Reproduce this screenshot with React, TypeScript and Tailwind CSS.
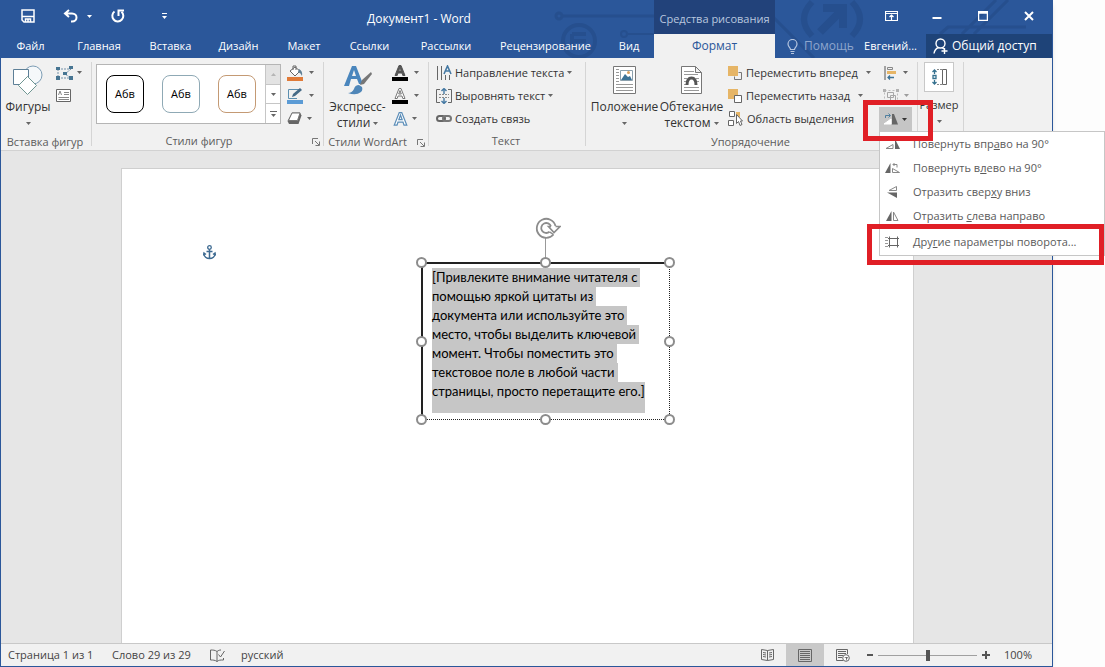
import React from "react";

type Kids = { children?: React.ReactNode };

function Caret({ className = "text-[#666]" }: { className?: string }) {
  return (
    <svg className={"h-[3px] w-[5px] shrink-0 " + className} viewBox="0 0 5 3" aria-hidden="true">
      <path d="M0 0h5L2.5 3z" fill="currentColor" />
    </svg>
  );
}

function Svg({ w, h, children, className = "" }: Kids & { w: number; h: number; className?: string }) {
  return (
    <svg width={w} height={h} viewBox={`0 0 ${w} ${h}`} fill="none" className={"shrink-0 " + className} aria-hidden="true">
      {children}
    </svg>
  );
}

function Launcher({ label }: { label: string }) {
  return (
    <button aria-label={label} className="absolute right-1 top-2">
      <Svg w={8} h={8}>
        <path d="M.5 6V.5H6M3 3l4 4M7.500 3.500v4h-4" stroke="#777" />
      </Svg>
    </button>
  );
}

function Group({ title, width, launcher, children }: Kids & { title: string; width: string; launcher?: boolean }) {
  return (
    <section aria-label={title || "Размер"} className={"relative flex shrink-0 flex-col pt-[3px] " + width}>
      <div className="flex h-[70px]">{children}</div>
      <div className="relative flex h-5 items-center justify-center whitespace-nowrap pt-[2px] text-[11px] text-[#5c5c5c]">
        <span className={launcher ? "pr-[18px]" : "pr-[3px]"}>{title}</span>
        {launcher && <Launcher label={title + ": параметры"} />}
      </div>
      <div className="absolute bottom-1 right-0 top-1 w-px bg-[#d5d5d5]" />
    </section>
  );
}

function BigButton({ icon, lines, caretBelow, width }: { icon: React.ReactNode; lines: string[]; caretBelow?: boolean; width: string }) {
  return (
    <button className={"flex shrink-0 flex-col items-center whitespace-nowrap text-[#333] " + width}>
      <span className="flex h-[38px] items-center justify-center">{icon}</span>
      {lines.map((line, i) => (
        <span key={line} className="flex h-4 items-center gap-[3px] text-[12px]">
          {line}
          {!caretBelow && i === lines.length - 1 && <Caret />}
        </span>
      ))}
      {caretBelow && (
        <span className="flex h-4 items-center">
          <Caret />
        </span>
      )}
    </button>
  );
}

function Row({ icon, text, caret, gap = "gap-1", caretGap = "" }: { icon: React.ReactNode; text?: string; caret?: boolean; gap?: string; caretGap?: string }) {
  return (
    <button className={"flex h-[23px] items-center whitespace-nowrap text-[11px] text-[#333] " + gap} aria-label={text ? undefined : "Параметры"}>
      {icon}
      {text}
      {caret && <Caret className={"text-[#666] " + caretGap} />}
    </button>
  );
}

const tabs: [string, string][] = [
  ["Файл", "w-[59px]"],
  ["Главная", "w-[78px]"],
  ["Вставка", "w-[65px]"],
  ["Дизайн", "w-[71px]"],
  ["Макет", "w-[60px]"],
  ["Ссылки", "w-[71px]"],
  ["Рассылки", "w-[82px]"],
  ["Рецензирование", "w-[117px]"],
  ["Вид", "w-[50px]"],
];

function Header() {
  return (
    <header className="relative bg-[#2b579a] text-white">
      <svg className="absolute right-0 top-0 h-[58px] w-[500px]" viewBox="0 0 500 58" fill="none" aria-hidden="true">
        <g stroke="#264f8e" strokeWidth="4">
          <circle cx="7" cy="16" r="3" strokeWidth="3" />
          <path d="M11 16H220l42 42" strokeWidth="3" />
          <circle cx="27" cy="41" r="16" />
          <path d="M20 34h14M20 41h14M20 48h10M20 34v14" />
          <circle cx="72" cy="34" r="3" strokeWidth="2" />
          <path d="M76 34h80" strokeWidth="2" />
          <path d="M260 2q-16 17 0 34M300 2q16 17 0 34" strokeWidth="6" />
          <path d="M268 32l22-22M271 8h20v20" strokeWidth="8" />
          <path d="M388 34l8-7h78M410 34l34-34M422 34l34-34" strokeWidth="3" />
        </g>
      </svg>
      <div className="relative flex h-[34px]">
        <div className="flex w-[653px] shrink-0 items-center pb-[2px]">
          <button aria-label="Сохранить" className="flex w-[54px] justify-center">
            <Svg w={14} h={14}>
              <path d="M1 1h12v12H3l-2-2zM1 7.500h12M4.500 13v-3h5v3M7 10v3" stroke="#fff" strokeWidth="1.500" />
            </Svg>
          </button>
          <button aria-label="Отменить" className="flex w-[31px] justify-center">
            <Svg w={16} h={14}>
              <path d="M6 1L2 4.500 6 8M2.500 4.500H9c6 0 6 8 0 8H8" stroke="#fff" strokeWidth="2" />
            </Svg>
          </button>
          <button aria-label="Список отмены" className="flex w-[6px] justify-center">
            <Caret className="text-white" />
          </button>
          <button aria-label="Повторить" className="flex w-[52px] justify-center">
            <Svg w={14} h={14}>
              <path d="M3.500 2.500A5.500 5.500 0 1 0 10.500 2.800" stroke="#fff" strokeWidth="2" />
              <path d="M7.500 7V1.500H13" stroke="#fff" strokeWidth="2" />
            </Svg>
          </button>
          <button aria-label="Настройка панели" className="flex w-10 justify-center">
            <Svg w={5} h={6}>
              <path d="M0 .5h5" stroke="#fff" />
              <path d="M0 3h5L2.500 6z" fill="#fff" />
            </Svg>
          </button>
          <h1 className="flex-1 pt-[5px] text-center">Документ1 - Word</h1>
        </div>
        <div className="flex w-[121px] shrink-0 items-center justify-center whitespace-nowrap bg-[#22427a] pt-1 text-[11px] text-[#b9c7df]">Средства рисования</div>
        <div className="flex flex-1 items-center justify-end pb-[2px]">
          <button aria-label="Параметры ленты" className="flex w-[46px] justify-center">
            <Svg w={13} h={10}>
              <path d="M.5.5h12v9H.5zM.5 2.500h12M6.500 9V4M4.500 6l2-2 2 2" stroke="#fff" strokeWidth="1.200" />
            </Svg>
          </button>
          <button aria-label="Свернуть" className="flex w-[46px] justify-center">
            <Svg w={10} h={10}>
              <path d="M.5 7h9" stroke="#fff" strokeWidth="2" />
            </Svg>
          </button>
          <button aria-label="Развернуть" className="flex w-[46px] justify-center">
            <Svg w={10} h={10}>
              <path d="M.5.5h9v9h-9zM0 2h10" stroke="#fff" strokeWidth="1.500" />
            </Svg>
          </button>
          <button aria-label="Закрыть" className="flex w-[46px] justify-center">
            <Svg w={10} h={10}>
              <path d="M1 1l8 8M9 1L1 9" stroke="#fff" strokeWidth="2" />
            </Svg>
          </button>
        </div>
      </div>
      <nav className="relative flex h-6 whitespace-nowrap text-[11px]">
        {tabs.map(([name, width]) => (
          <button key={name} className={"shrink-0 text-center " + width}>
            {name}
          </button>
        ))}
        <button className="w-[121px] shrink-0 bg-[#f1f1f1] text-[12px] text-[#2b579a]">Формат</button>
        <button className="flex w-[80px] shrink-0 items-center gap-[6px] pl-3 text-[12px] text-[#8ea6cd]">
          <Svg w={11} h={15} className="text-[#b5c5df]">
            <path d="M3.500 10.500c0-2-2.500-2.500-2.500-5.500a4.500 4.500 0 0 1 9 0c0 3-2.500 3.500-2.500 5.500zM3.500 12.500h4M4 14.500h3" stroke="currentColor" strokeWidth="1.200" />
          </Svg>
          Помощь
        </button>
        <button className="flex-1 text-center">Евгений...</button>
        <button className="flex w-[126px] shrink-0 items-center gap-1 bg-[#1e4378] pl-[7px] text-[12px]">
          <Svg w={15} h={16}>
            <circle cx="7.500" cy="5.500" r="4.500" stroke="#fff" strokeWidth="1.400" />
            <path d="M5.500 9.500C3 10.500 1.500 12.500 1 15.500M9 9.500l2 1.500M11.500 10v6M8.500 13h6" stroke="#fff" strokeWidth="1.400" />
          </Svg>
          Общий доступ
        </button>
      </nav>
    </header>
  );
}

const samples = ["border-black", "border-[#8fa9b5]", "border-[#c49a74]"];

const menuItems: { before: string; key: string; after: string; icon: React.ReactNode }[] = [
  {
    before: "Повернуть впр", key: "а", after: "во на 90°",
    icon: <><path d="M1 11.500h7v-4z" stroke="#888" /><path d="M10 2v10h5z" fill="#666" /></>,
  },
  {
    before: "Повернуть в", key: "л", after: "ево на 90°",
    icon: <><path d="M5.500 2v10H0z" fill="#666" /><path d="M7.500 11.500h7l-7-4zM8 3.500h4v3M9.500 2L8 3.500 9.500 5" stroke="#888" /></>,
  },
  {
    before: "Отразить свер", key: "х", after: "у вниз",
    icon: <><path d="M11.500 1.500v4H4z" stroke="#888" /><path d="M2 7.500h10V13z" fill="#666" /></>,
  },
  {
    before: "Отразить ", key: "с", after: "лева направо",
    icon: <><path d="M6.500 2v10H1z" fill="#666" /><path d="M8.500 3v8.500H13z" stroke="#888" /></>,
  },
];

function RotateMenu() {
  return (
    <div role="menu" className="absolute left-0 top-full z-20 w-[226px] border border-[#c6c6c6] bg-white text-[11px] text-[#5a5a5a]">
      {menuItems.map((item) => (
        <button key={item.before} role="menuitem" className="flex h-6 w-full items-center gap-3 whitespace-nowrap pl-[5px]">
          <Svg w={16} h={14}>{item.icon}</Svg>
          <span>
            {item.before}<u>{item.key}</u>{item.after}
          </span>
        </button>
      ))}
      <button role="menuitem" className="flex h-[27px] w-full items-center gap-3 whitespace-nowrap pl-[5px]">
        <Svg w={16} h={14}>
          <path d="M4.500 3.500h8v7h-8zM4.500 1.500v11M12.500 1.500v11M3 3.500h11M3 10.500h11" stroke="#666" />
          <path d="M0 2.500h3M0 5.500h3M0 8.500h3M0 11.500h3" stroke="#999" />
        </Svg>
        <span>
          Дру<u>г</u>ие параметры поворота...
        </span>
      </button>
      <div className="pointer-events-none absolute -bottom-[10px] -left-[13px] right-0 h-[41px] border-[5px] border-[#e01f26]" />
    </div>
  );
}

function LetterA({ fill, stroke, bar }: { fill: string; stroke: string; bar?: boolean }) {
  return (
    <span className="flex w-4 flex-col items-center">
      <Svg w={bar ? 12 : 15} h={bar ? 11 : 14}>
        <g transform={bar ? undefined : "scale(1.25)"}>
          <path d="M1 10.500L5 .5h2l4 10H8.800L8 8H4l-.8 2.500zM4.700 6h2.600L6 2.500z" fill={fill} stroke={stroke} strokeWidth="1" />
        </g>
      </Svg>
      {bar && <span className="mt-px h-1 w-4 bg-black" />}
    </span>
  );
}

function Ribbon() {
  return (
    <div className="relative flex h-[93px] border-b border-[#d2d2d2] bg-[#f1f1f1]">
      <Group title="Вставка фигур" width="w-[91px]">
        <BigButton
          width="w-[54px]"
          caretBelow
          lines={["Фигуры"]}
          icon={
            <Svg w={30} h={30}>
              <circle cx="20" cy="10" r="9" stroke="#7d9db5" fill="#f5f8fa" />
              <path d="M.5 4.500h15v15H.5z" stroke="#5d7f97" fill="#fff" />
              <path d="M14.500 11.500l9 9-9 9-9-9z" stroke="#6f9692" fill="#fff" />
            </Svg>
          }
        />
        <div className="ml-px flex flex-col">
          <Row
            caret
            icon={
              <Svg w={17} h={14}>
                <path d="M2 3h13M2 12h13M2 3v9M15 3L9 8l6 4" stroke="#7391a8" strokeDasharray="2 1" />
                <path d="M0 1h4v3H0zM13 0h4v3h-4zM0 10h4v4H0zM13 10h4v4h-4zM7 6h4v3H7z" fill="#477592" />
              </Svg>
            }
          />
          <Row
            icon={
              <Svg w={15} h={13}>
                <path d="M.5.5h14v12H.5z" stroke="#666" fill="#fff" />
                <path d="M2.500 6l1.500-4 1.500 4M8 3.500h5M8 5.500h5M2.500 8.500H13M2.500 10.500H13" stroke="#888" />
              </Svg>
            }
          />
        </div>
      </Group>

      <Group title="Стили фигур" width="w-[232px]" launcher>
        <div className="ml-1 mt-[3px] flex h-[60px] w-[185px] shrink-0 border border-[#b5b5b5] bg-white">
          <div className="flex flex-1 items-center justify-between px-[9px]">
            {samples.map((color) => (
              <button key={color} className={"h-[38px] w-[38px] rounded-lg border bg-white text-[11px] text-black " + color}>
                Абв
              </button>
            ))}
          </div>
          <div className="flex w-[15px] flex-col border-l border-[#c6c6c6]">
            <button aria-label="Вверх" className="flex flex-1 items-center justify-center bg-[#e3e3e3]">
              <Caret className="rotate-180 text-[#b5b5b5]" />
            </button>
            <button aria-label="Вниз" className="flex flex-1 items-center justify-center border-y border-[#c6c6c6]">
              <Caret />
            </button>
            <button aria-label="Все стили" className="flex flex-1 flex-col items-center justify-center gap-[2px]">
              <span className="h-px w-[7px] bg-[#666]" />
              <Caret />
            </button>
          </div>
        </div>
        <div className="ml-[6px] flex flex-col">
          <Row
            caret
            gap="gap-[6px]"
            icon={
              <Svg w={16} h={16}>
                <path d="M3 6l5-4 5 4-5 5zM6 5V1h3v4" fill="#fff" stroke="#666" />
                <path d="M12 4q4 2 3 7-1-3-4-4z" fill="#5f7f95" />
                <path d="M0 12h16v4H0z" fill="#e07b39" />
              </Svg>
            }
          />
          <Row
            caret
            gap="gap-[6px]"
            icon={
              <Svg w={16} h={16}>
                <path d="M12 1.500H1.500v9H10" stroke="#5c8fb0" />
                <path d="M5 9l1-3 7-6 2 2-7 6z" fill="#466b87" />
                <path d="M0 12h16v4H0z" fill="#5b9bd5" />
              </Svg>
            }
          />
          <Row
            caret
            gap="gap-[5px]"
            icon={
              <Svg w={15} h={13}>
                <path d="M5 .5h8l1.500 3-3 8.500H2L.5 9z" fill="#666" />
                <path d="M5 1h8L10.500 8.500h-9z" fill="#fff" stroke="#777" />
              </Svg>
            }
          />
        </div>
      </Group>

      <Group title="Стили WordArt" width="w-[105px]" launcher>
        <BigButton
          width="w-[67px]"
          lines={["Экспресс-", "стили"]}
          icon={
            <Svg w={30} h={30}>
              <path d="M1 21L9 1h4l7 18h-4l-2-5H8l-2 7zM9 11h4l-2-6z" fill="#4a86bd" />
              <path d="M28 7l-9 8-2 5 4-1 8-10z" fill="#777" />
              <path d="M16 20q-4 0-5 4-2 4-6 4 8 3 13-1 2-2 1-5z" fill="#4f86b8" />
            </Svg>
          }
        />
        <div className="ml-px flex flex-col">
          <Row caret gap="gap-[6px]" icon={<LetterA fill="#555" stroke="#555" bar />} />
          <Row caret gap="gap-[6px]" icon={<LetterA fill="#fff" stroke="#777" bar />} />
          <Row caret icon={<LetterA fill="#fff" stroke="#5b8db8" />} />
        </div>
      </Group>

      <Group title="Текст" width="w-[157px]">
        <div className="ml-[7px] flex flex-col">
          <Row
            caret
            text="Направление текста"
            gap="gap-[3px]"
            icon={
              <Svg w={16} h={16}>
                <path d="M1.500 1v14M5.500 1v14M9.500 10v5M13.500 10v5" stroke="#666" />
                <path d="M8 9l3.500-8L15 9M9.500 6h4" stroke="#4579a3" strokeWidth="1.600" />
              </Svg>
            }
          />
          <Row
            caret
            text="Выровнять текст"
            gap="gap-[3px]"
            icon={
              <Svg w={16} h={16}>
                <path d="M4 1.500H.5v13H4M12 1.500h3.500v13H12" stroke="#666" />
                <path d="M3 6.500h10M3 9.500h10" stroke="#888" strokeDasharray="2 1" />
                <path d="M8 0v6M5.500 3L8 .5 10.500 3M8 10v6M5.500 13L8 15.500l2.500-2.500" stroke="#4579a3" strokeWidth="1.400" />
              </Svg>
            }
          />
          <Row
            text="Создать связь"
            gap="gap-[3px]"
            icon={
              <Svg w={16} h={16}>
                <rect x="1" y="5" width="8" height="5" rx="2.500" stroke="#666" strokeWidth="2" />
                <rect x="7" y="5" width="8" height="5" rx="2.500" stroke="#777" strokeWidth="2" />
              </Svg>
            }
          />
        </div>
      </Group>

      <Group title="Упорядочение" width="w-[332px]">
        <BigButton
          width="w-[77px]"
          caretBelow
          lines={["Положение"]}
          icon={
            <Svg w={23} h={28}>
              <path d="M.5.5h22v27H.5z" stroke="#777" fill="#fff" />
              <path d="M3 3.500h3M3 6.500h3M3 9.500h3M3 12.500h3M3 15.500h3M3 18.500h17M3 21.500h17M3 24.500h17" stroke="#999" />
              <path d="M7.500 4.500h12v10h-12z" stroke="#8ba0ad" fill="#fff" />
              <path d="M8 14l4-6 3 3 2-1 2 4z" fill="#3c7296" />
              <circle cx="15.500" cy="6.500" r="1.500" fill="#d8a05d" />
            </Svg>
          }
        />
        <BigButton
          width="w-[57px]"
          lines={["Обтекание", "текстом"]}
          icon={
            <Svg w={21} h={28}>
              <path d="M.5.5h14l6 6v21H.5zM14.500.5v6h6" stroke="#777" fill="#fff" />
              <path d="M3 5.500h10M3 8.500h14M3 12.500h3M3 15.500h2M3 18.500h2M15 12.500h3M16 15.500h2M3 21.500h15M3 24.500h15" stroke="#999" />
              <path d="M6 19q0-7 4.500-7t4.500 7" stroke="#555" strokeWidth="3" />
            </Svg>
          }
        />
        <div className="ml-2 flex w-[147px] shrink-0 flex-col">
          <Row
            caret
            caretGap="ml-1"
            text="Переместить вперед"
            icon={
              <Svg w={14} h={14}>
                <path d="M6.500 10.500v3h7v-7h-3" stroke="#777" />
                <path d="M0 0h10v10H0z" fill="#e6b566" />
              </Svg>
            }
          />
          <Row
            caret
            caretGap="ml-1"
            text="Переместить назад"
            icon={
              <Svg w={14} h={14}>
                <path d="M0 0h10v10H0z" fill="#e6b566" />
                <path d="M6.500 6.500h7v7h-7z" stroke="#666" fill="#fff" />
              </Svg>
            }
          />
          <Row
            text="Область выделения"
            icon={
              <Svg w={15} h={15}>
                <path d="M1.500.5h5v5h-5zM.5 9.500h5v5h-5z" stroke="#666" fill="#fff" />
                <path d="M8 1h4v5H8z" fill="#e6b566" />
                <path d="M8.500 3.500v9l2-2 1.500 4 2-1-1.500-3.500h2z" stroke="#666" fill="#fff" />
              </Svg>
            }
          />
        </div>
        <div className="ml-1 flex w-[34px] shrink-0 flex-col">
          <div className="flex justify-center">
            <Row
              caret
              gap="gap-[6px]"
              icon={
                <Svg w={13} h={14}>
                  <path d="M1 0v14" stroke="#555" />
                  <path d="M3.500 1.500h5v2h-5z" stroke="#888" />
                  <path d="M3 5h9v3H3z" fill="#e6b566" />
                  <path d="M10 11.500H4M6 9.500l-2 2 2 2" stroke="#3c7296" strokeWidth="1.300" />
                </Svg>
              }
            />
          </div>
          <div className="flex justify-center opacity-60">
            <Row
              caret
              gap="gap-[5px]"
              icon={
                <Svg w={16} h={14}>
                  <path d="M1.500 1.500h13v11h-13z" stroke="#999" strokeDasharray="2 2" />
                  <path d="M4.500 3.500h6v5h-6zM7.500 6.500h5v5h-5z" stroke="#777" />
                  <path d="M0 0h3v3H0zM13 0h3v3h-3zM0 11h3v3H0zM13 11h3v3h-3z" fill="#888" />
                </Svg>
              }
            />
          </div>
          <div className="relative">
            <button aria-label="Повернуть" className="flex h-6 w-[33px] items-center justify-center gap-[3px] bg-[#c5c5c5]">
              <Svg w={15} h={13}>
                <path d="M0 11h7V6z" stroke="#fff" fill="#fff" />
                <path d="M8 1v10.500h6L10 1z" fill="#666" />
                <path d="M1.500 5V2.500H6M4.500.5l2 2-2 2" stroke="#4f7f9f" />
              </Svg>
              <Caret className="text-[#333]" />
            </button>
            <RotateMenu />
            <div className="pointer-events-none absolute -left-4 -top-[7px] z-30 h-[41px] w-[70px] border-[5px] border-[#e01f26]" />
          </div>
        </div>
      </Group>

      <Group title="" width="w-[46px]">
        <button className="flex w-full flex-col items-center pr-[4px] pt-px text-[11px] text-[#333]">
          <span className="flex h-[30px] w-[30px] items-center justify-center border border-[#c8c8c8] bg-white">
            <Svg w={16} h={16}>
              <path d="M3.500 1v4M1.500 3l2-2 2 2M3.500 11v4M1.500 13l2 2 2-2M2 6.500h3v3H2z" stroke="#35718f" strokeWidth="1.300" />
              <path d="M6 .5h5M6 15.500h5" stroke="#888" strokeDasharray="2 1" />
              <path d="M11.500.5h4v15h-4z" stroke="#666" />
            </Svg>
          </span>
          <span className="mt-[5px] flex h-4 items-center">Размер</span>
          <span className="flex h-4 items-center">
            <Caret />
          </span>
        </button>
      </Group>
    </div>
  );
}

const quote = [
  "[Привлеките внимание читателя с",
  "помощью яркой цитаты из",
  "документа или используйте это",
  "место, чтобы выделить ключевой",
  "момент. Чтобы поместить это",
  "текстовое поле в любой части",
];

const handles = [
  "-left-[5px] -top-[5px]",
  "left-[119px] -top-[5px]",
  "-right-[5px] -top-[5px]",
  "-left-[5px] top-[74px]",
  "-right-[5px] top-[74px]",
  "-left-[5px] -bottom-[5px]",
  "left-[119px] -bottom-[5px]",
  "-right-[5px] -bottom-[5px]",
];

function Page() {
  return (
    <main className="flex flex-1 bg-[#e6e6e6] pl-[120px] pt-[17px]">
      <div className="relative w-[793px] border-x border-t border-[#cfcfcf] bg-white">
        <Svg w={13} h={15} className="absolute left-[81px] top-[76px]">
          <circle cx="6.500" cy="2.500" r="1.800" stroke="#3d6a91" strokeWidth="1.300" />
          <path d="M6.500 4.500V14M3.500 6.500h6M1 8.500c0 3 2.500 5 5.500 5s5.500-2 5.500-5M.5 10.500L1 8l2 1.500M12.500 10.500L12 8l-2 1.500" stroke="#3d6a91" strokeWidth="1.500" />
        </Svg>
        <div className="absolute left-[299px] top-[93px] h-[158px] w-[249px]">
          <div className="h-full border-b border-l-2 border-r border-t-2 border-[#222] [border-bottom-style:dotted] [border-right-style:dotted]" />
          <div className="absolute left-[11px] top-[6px] whitespace-nowrap font-['Lato','Noto_Sans',sans-serif] text-[13px] leading-[19px] text-black">
            {quote.map((line) => (
              <div key={line} className="w-fit bg-[#c6c6c6] pr-[3px]">
                {line}
              </div>
            ))}
            <div className="w-fit bg-[#c6c6c6] pb-3">страницы, просто перетащите его.]</div>
          </div>
          <div className="absolute -top-6 left-[124px] h-6 w-px bg-[#999]" />
          <Svg w={26} h={24} className="absolute -top-[46px] left-[114px]">
            <path d="M18.500 18.500A9.500 9.500 0 1 1 20.500 10" stroke="#8c8c8c" strokeWidth="1.800" />
            <path d="M14.500 15.800A5 5 0 1 1 16 10.500" stroke="#8c8c8c" strokeWidth="1.800" />
            <path d="M18.500 18.500l-4-2.700" stroke="#8c8c8c" strokeWidth="1.500" />
            <path d="M16 10.500h-2.500l5.500 6 6-6h-4.500" stroke="#8c8c8c" strokeWidth="1.600" fill="#fff" />
          </Svg>
          {handles.map((place) => (
            <span key={place} className={"absolute h-[11px] w-[11px] rounded-full border-2 border-[#8c8c8c] bg-white " + place} />
          ))}
        </div>
      </div>
    </main>
  );
}

function StatusBar() {
  return (
    <footer className="flex h-[23px] items-center whitespace-nowrap border-t border-[#c8c8c8] bg-[#f1f1f1] text-[11px] text-[#444]">
      <button className="ml-[7px] w-[104px] text-left">Страница 1 из 1</button>
      <button className="w-[98px] text-left">Слово 29 из 29</button>
      <button aria-label="Правописание" className="w-[31px]">
        <Svg w={15} h={13}>
          <path d="M7 2.500C5 1 3 1 .5 1v10c2.500 0 4.500 0 6.500 1.500 2-1.500 3-1.500 6.500-1.500V9M7 2.500v10M7 2.500C8.500 1.500 9 1 11 1M8.500 5.500l2 2.500 4-6" stroke="#666" />
        </Svg>
      </button>
      <button>русский</button>
      <div className="ml-auto flex h-full items-center">
        <button aria-label="Режим чтения" className="flex w-[38px] justify-center">
          <Svg w={13} h={12}>
            <path d="M6.500 1.500l-6-1v10l6 1 6-1V.5zM6.500 1.500v10M2 3.500l3 .5M2 5.500l3 .5M2 7.500l3 .5M8 4l3-.5M8 6l3-.5M8 8l3-.5" stroke="#666" />
          </Svg>
        </button>
        <button aria-label="Разметка страницы" className="flex h-full w-[38px] items-center justify-center bg-[#c9c9c9]">
          <Svg w={14} h={13}>
            <path d="M.5.5h13v12H.5zM2 2.500h10M2 4.500h10M2 6.500h10M2 8.500h10M2 10.500h10" stroke="#666" />
          </Svg>
        </button>
        <button aria-label="Веб-документ" className="flex w-[38px] justify-center">
          <Svg w={14} h={13}>
            <path d="M7 11.500H.5V.5h11V5M2 2.500h8M2 4.500h8M2 6.500h5M2 8.500h4" stroke="#666" />
            <circle cx="10" cy="9" r="3.300" fill="#fff" stroke="#666" />
            <path d="M8 8l2 1v3l2-4z" fill="#666" />
          </Svg>
        </button>
        <button aria-label="Уменьшить" className="flex w-4 justify-center">
          <span className="h-[2px] w-[6px] bg-[#555]" />
        </button>
        <input
          type="range"
          aria-label="Масштаб"
          defaultValue={50}
          className="h-3 w-[99px] appearance-none bg-[linear-gradient(#a0a0a0,#a0a0a0)] bg-[length:100%_1px] bg-center bg-no-repeat [&::-webkit-slider-thumb]:h-[11px] [&::-webkit-slider-thumb]:w-1 [&::-webkit-slider-thumb]:appearance-none [&::-webkit-slider-thumb]:bg-[#555]"
        />
        <button aria-label="Увеличить" className="flex w-[17px] justify-center">
          <Svg w={8} h={8}>
            <path d="M4 0v8M0 4h8" stroke="#555" strokeWidth="2" />
          </Svg>
        </button>
        <button className="w-[58px] pr-[10px] text-center">100%</button>
      </div>
    </footer>
  );
}

export default function App() {
  return (
    <div className="min-h-screen overflow-x-hidden bg-[#fdfdfd] pr-[52px] font-['Open_Sans','Noto_Sans',sans-serif] text-[12px] leading-4">
      <div className="flex min-h-screen flex-col border-x border-b border-[#2b579a] shadow-md">
        <Header />
        <Ribbon />
        <Page />
        <StatusBar />
      </div>
    </div>
  );
}
